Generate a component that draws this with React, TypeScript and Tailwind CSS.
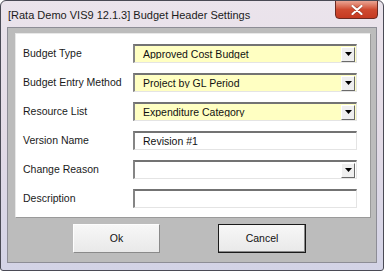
import React from "react";

const font = { fontFamily: '"Liberation Sans", Arial, sans-serif' };

function Arrow() {
  return (
    <div className="w-[14px] h-[15px] mr-[1px] flex items-center justify-center bg-[#efefef] border border-t-[#ffffff] border-l-[#ffffff] border-b-[#6a6a6a] border-r-[#6a6a6a]">
      <svg width="7" height="4" viewBox="0 0 7 4">
        <path d="M0 0 H7 L3.5 4 Z" fill="#000" />
      </svg>
    </div>
  );
}

function Field({ value, yellow, dropdown }: { value?: string; yellow?: boolean; dropdown?: boolean }) {
  return (
    <div
      className={`w-[224px] h-[19px] flex items-center border-t-2 border-l-2 border-r border-b border-t-[#737373] border-l-[#858585] border-r-[#e4e4e4] border-b-[#e4e4e4] ${
        yellow ? "bg-[#ffffc2]" : "bg-white"
      }`}
    >
      <div className="flex-1 pl-[8px] text-[10.5px] text-[#111] leading-none truncate">{value}</div>
      {dropdown && <Arrow />}
    </div>
  );
}

function Row({ label, children }: { label: string; children: React.ReactNode }) {
  return (
    <div className="flex items-center h-[19px]">
      <div className="w-[110px] text-[10.5px] text-[#1a1a1a] leading-none">{label}</div>
      {children}
    </div>
  );
}

export default function App() {
  return (
    <div style={font} className="w-[384px] h-[271px] bg-white">
      <div className="w-[384px] h-[271px] flex flex-col rounded-t-[6px] rounded-b-[3px] border border-[#4a4a55] bg-gradient-to-b from-[#ebe4ec] via-[#e3dbe6] to-[#d3d3e6] overflow-hidden">
        {/* Title bar */}
        <div className="h-[26px] flex items-start relative">
          <div className="pl-[7px] pt-[9px] text-[11px] text-[#1b1b1b] leading-none">
            [Rata Demo VIS9 12.1.3] Budget Header Settings
          </div>
          <div className="absolute right-[5px] top-[-1px] w-[43px] h-[19px] rounded-b-[4px] border border-[#6b2a22] bg-gradient-to-b from-[#e9a493] via-[#cf4a30] to-[#c53a22] flex items-center justify-center">
            <svg width="12" height="10" viewBox="0 0 12 10">
              <path d="M1.5 1 L10.5 9 M10.5 1 L1.5 9" stroke="#3a1410" strokeWidth="3.2" strokeLinecap="round" opacity="0.35" />
              <path d="M1.5 1 L10.5 9 M10.5 1 L1.5 9" stroke="#ffffff" strokeWidth="2.2" strokeLinecap="round" />
            </svg>
          </div>
        </div>
        {/* Client */}
        <div className="flex-1 flex px-[6px] pb-[7px]">
          <div className="flex-1 flex flex-col bg-[#bcbcbc] border border-[#8d8d96] pt-[5px] pl-[7px] pr-[5px]">
            <div className="h-[185px] bg-white border border-t-[#e8e8e8] border-l-[#e8e8e8] border-r-[#9a9a9a] border-b-[#9a9a9a] pt-[10px] pl-[7px] flex flex-col gap-[10px]">
              <Row label="Budget Type">
                <Field value="Approved Cost Budget" yellow dropdown />
              </Row>
              <Row label="Budget Entry Method">
                <Field value="Project by GL Period" yellow dropdown />
              </Row>
              <Row label="Resource List">
                <Field value="Expenditure Category" yellow dropdown />
              </Row>
              <Row label="Version Name">
                <Field value="Revision #1" />
              </Row>
              <Row label="Change Reason">
                <Field dropdown />
              </Row>
              <Row label="Description">
                <Field />
              </Row>
            </div>
            <div className="flex pt-[6px] pl-[58px] gap-[58px]">
              <button className="w-[87px] h-[29px] bg-gradient-to-b from-[#f7f7f7] to-[#e9e9e9] border border-t-[#fdfdfd] border-l-[#fdfdfd] border-r-[#8a8a8a] border-b-[#8a8a8a] text-[10.5px] text-[#111]">
                Ok
              </button>
              <button className="w-[88px] h-[29px] bg-gradient-to-b from-[#f7f7f7] to-[#e9e9e9] border border-[#1a1a1a] shadow-[inset_-1px_-1px_0_#8a8a8a] text-[10.5px] text-[#111]">
                Cancel
              </button>
            </div>
          </div>
        </div>
      </div>
    </div>
  );
}
